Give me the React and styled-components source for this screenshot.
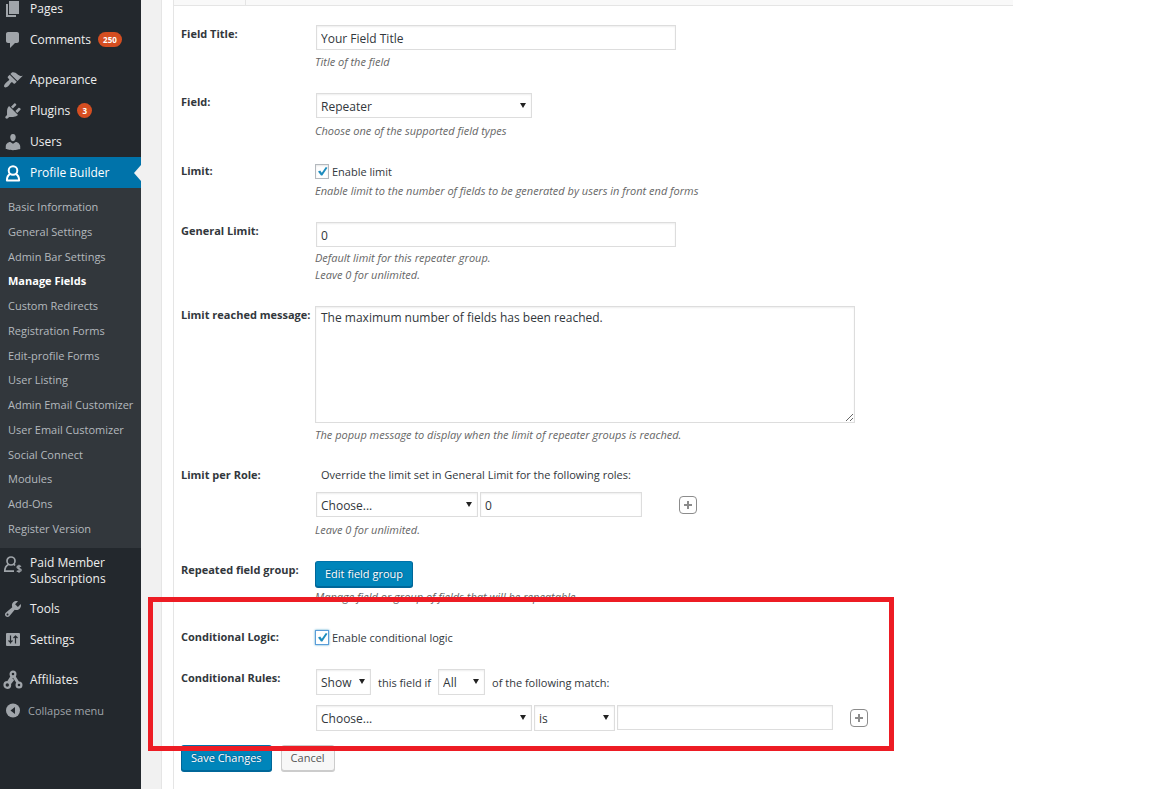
import React from 'react';
import styled, { createGlobalStyle, css } from 'styled-components';

const colors = {
  menu: '#23282d',
  submenu: '#32373c',
  active: '#0073aa',
  icon: '#a0a5aa',
  badge: '#d54e21',
  text: '#32373c',
  muted: '#666',
  border: '#ddd',
  primary: '#0085ba',
  highlight: '#ed1c24',
};

const GlobalStyle = createGlobalStyle`
  * {
    box-sizing: border-box;
  }

  body {
    margin: 0;
    background: #fff;
    color: ${colors.text};
    font-family: 'Open Sans', 'Noto Sans', sans-serif;
    font-size: 11px;
    line-height: 17px;
    overflow: hidden;
  }

  input, select, textarea, button {
    font-family: inherit;
    color: inherit;
    margin: 0;
  }
`;

const Layout = styled.div`
  display: flex;
  min-height: 100vh;
`;

const Sidebar = styled.nav`
  flex: 0 0 141px;
  height: 100vh;
  overflow: hidden;
  background: ${colors.menu};
`;

const Menu = styled.ul`
  list-style: none;
  /* the menu is scrolled a little under the top edge */
  margin: -7px 0 0;
  padding: 0;
`;

const MenuItem = styled.li`
  margin-bottom: ${({ $gap }) => $gap || 0}px;
`;

const MenuLink = styled.a`
  position: relative;
  display: flex;
  align-items: ${({ $tall }) => ($tall ? 'flex-start' : 'center')};
  gap: 7px;
  min-height: 31px;
  padding: ${({ $tall }) => ($tall ? '7px 20px 6px 3px' : '0 0 0 3px')};
  color: #eee;
  font-size: 12px;
  line-height: 16px;
  text-decoration: none;

  svg {
    flex: none;
    color: ${colors.icon};
  }

  ${({ $active }) => $active && css`
    background: ${colors.active};
    color: #fff;

    svg {
      color: #fff;
    }

    &::after {
      content: '';
      position: absolute;
      right: 0;
      top: 8px;
      border: 8px solid transparent;
      border-left-width: 0;
      border-right: 7px solid #f1f1f1;
    }
  `}
`;

const CollapseButton = styled.button`
  display: flex;
  align-items: center;
  gap: 5px;
  height: 31px;
  padding: 0 0 0 3px;
  border: 0;
  background: none;
  color: ${colors.icon};
  font-size: 11px;
`;

const Badge = styled.span`
  min-width: 15px;
  padding: 0 5px;
  border-radius: 8px;
  background: ${colors.badge};
  color: #fff;
  font-size: 8px;
  font-weight: 700;
  line-height: 15px;
  text-align: center;
`;

const Submenu = styled.ul`
  display: flex;
  flex-direction: column;
  justify-content: space-between;
  min-height: 360px;
  margin: 0;
  padding: 7px 0;
  list-style: none;
  background: ${colors.submenu};
`;

const SubmenuLink = styled.a`
  display: block;
  padding-left: 8px;
  color: ${({ $current }) => ($current ? '#fff' : '#b4b9be')};
  font-size: 11px;
  font-weight: ${({ $current }) => ($current ? 700 : 400)};
  line-height: 24px;
  text-decoration: none;
  white-space: nowrap;
`;

const Gutter = styled.div`
  flex: 0 0 21px;
  background: #f1f1f1;
  border-right: 1px solid #e5e5e5;
`;

const Main = styled.main`
  flex: 1;
  margin-left: 11px;
  border-left: 1px solid #e5e5e5;
`;

const TableHead = styled.div`
  max-width: 839px;
  height: 6px;
  background: #f9f9f9;
  border-bottom: 1px solid #e5e5e5;
`;

const HeadCell = styled.div`
  width: 72px;
  height: 5px;
  border-right: 1px solid #e5e5e5;
`;

const Form = styled.form`
  padding: 19px 8px 18px 7px;
`;

const FieldRow = styled.div`
  display: grid;
  grid-template-columns: 134px auto;
  justify-content: start;
  margin-bottom: ${({ $last }) => ($last ? 0 : 23)}px;
`;

const FieldLabel = styled.label`
  font-weight: 700;
  white-space: nowrap;
`;

const Description = styled.p`
  margin: ${({ $space }) => ($space === undefined ? 3 : $space)}px 0 0;
  color: ${colors.muted};
  font-style: italic;
`;

const inset = css`
  border: 1px solid ${colors.border};
  background: #fff;
  box-shadow: inset 0 1px 2px rgba(0, 0, 0, 0.07);
  font-size: 12px;
  outline: none;
`;

const TextInput = styled.input`
  ${inset}
  display: block;
  width: ${({ $width }) => $width}px;
  height: 25px;
  margin-left: ${({ $flush }) => ($flush ? 0 : 1)}px;
  padding: 1px 4px 0;
`;

const TextArea = styled.textarea`
  ${inset}
  display: block;
  width: 540px;
  height: 117px;
  padding: 2px 5px;
  line-height: 18px;
`;

const SelectBox = styled.span`
  position: relative;
  display: block;
  width: ${({ $width }) => $width}px;
  margin-left: ${({ $flush }) => ($flush ? 0 : 1)}px;

  &::after {
    content: '';
    position: absolute;
    right: 6px;
    top: 10px;
    border: 3px solid transparent;
    border-top: 5px solid #222;
    border-bottom: 0;
    pointer-events: none;
  }
`;

const NativeSelect = styled.select`
  ${inset}
  display: block;
  appearance: none;
  width: 100%;
  height: ${({ $tall }) => ($tall ? 26 : 25)}px;
  padding: 1px 4px 0;
`;

const CheckLabel = styled.label`
  display: flex;
  align-items: center;
  gap: 3px;
  height: 18px;
`;

const CheckBox = styled.span`
  position: relative;
  width: 14px;
  height: 15px;

  svg {
    position: absolute;
    left: 2px;
    top: 2px;
    pointer-events: none;
  }
`;

const NativeCheckbox = styled.input`
  display: block;
  appearance: none;
  width: 14px;
  height: 15px;
  border: 1px solid ${({ $focused }) => ($focused ? '#5b9dd9' : '#b4b9be')};
  background: #fff;
  box-shadow: ${({ $focused }) => ($focused
    ? '0 0 2px rgba(30, 140, 190, 0.8)'
    : 'inset 0 1px 2px rgba(0, 0, 0, 0.1)')};
`;

const ControlLine = styled.div`
  display: flex;
  align-items: ${({ $center }) => ($center ? 'center' : 'flex-start')};
  gap: ${({ $gap }) => $gap}px;
  margin-top: ${({ $top }) => $top || 0}px;
`;

const Intro = styled.div`
  padding-left: 6px;
`;

const AddButton = styled.button`
  display: flex;
  align-items: center;
  justify-content: center;
  width: 18px;
  height: 18px;
  margin-left: ${({ $offset }) => $offset}px;
  align-self: center;
  padding: 0;
  border: 1px solid #8c8c8c;
  border-radius: 4px;
  background: #fff;
  color: #8c8c8c;
`;

const Button = styled.button`
  display: block;
  height: 26px;
  padding: 0 9px 1px;
  border: 1px solid #ccc;
  border-radius: 3px;
  background: #f7f7f7;
  box-shadow: 0 1px 0 #ccc;
  color: #555;
  font-size: 11px;
  white-space: nowrap;

  ${({ $primary }) => $primary && css`
    border-color: #0073aa #006799 #006799;
    background: ${colors.primary};
    box-shadow: 0 1px 0 #006799;
    color: #fff;
    text-shadow: 0 -1px 1px #006799, 1px 0 1px #006799;
  `}
`;

const ConditionalGroup = styled.section`
  position: relative;
  width: fit-content;
`;

const Highlight = styled.div`
  position: absolute;
  inset: -31px -26px -20px -33px;
  border: 5px solid ${colors.highlight};
  pointer-events: none;
  z-index: 1;
`;

const Actions = styled.div`
  display: flex;
  gap: 9px;
  margin-top: 14px;
`;

const Icon = ({ children }) => (
  <svg width="20" height="20" viewBox="0 0 20 20" fill="currentColor" aria-hidden="true">
    {children}
  </svg>
);

const icons = {
  pages: <path d="M6 15V2h10v13H6zm-1 1h8v2H3V5h2v11z" />,
  comments: <path d="M5 2h9c1.1 0 2 .9 2 2v7c0 1.1-.9 2-2 2h-2l-5 5v-5H5c-1.1 0-2-.9-2-2V4c0-1.1.9-2 2-2z" />,
  appearance: <path d="M14.48 11.06L7.41 3.99l1.5-1.5c.5-.56 2.3-.47 3.51.32 1.21.8 1.43 1.28 2.91 2.1 1.18.64 2.45 1.26 4.45.85zm-.71.71L6.7 4.7 4.93 6.47c-.39.39-.39 1.02 0 1.41l1.06 1.06c.39.39.39 1.03 0 1.42-.6.6-1.43 1.11-2.21 1.69-.35.26-.7.53-1.01.84C1.43 14.23.4 16.08 1.4 17.07c.99 1 2.84-.03 4.18-1.36.31-.31.58-.66.85-1.02.57-.78 1.08-1.61 1.69-2.21.39-.39 1.02-.39 1.41 0l1.06 1.06c.39.39 1.02.39 1.41 0z" />,
  plugins: <path d="M13.11 4.36L9.87 7.6 8 5.73l3.24-3.24c.35-.34 1.05-.2 1.56.32.52.51.66 1.21.31 1.55zm-8 1.77l.91-1.12 9.01 9.01-1.19.84c-.71.71-2.63 1.16-3.82 1.16H6.14L4.9 17.26c-.59.59-1.54.59-2.12 0-.59-.58-.59-1.53 0-2.12l1.24-1.24v-3.88c0-1.13.4-3.19 1.09-3.89zm7.26 3.97l3.24-3.24c.34-.35 1.04-.21 1.55.31.52.51.66 1.21.31 1.55l-3.24 3.25z" />,
  users: <path d="M10 9.25c-2.27 0-2.73-3.44-2.73-3.44C7 4.02 7.82 2 9.97 2c2.16 0 2.98 2.02 2.71 3.81 0 0-.41 3.44-2.68 3.44zm0 2.57L12.72 10c2.39 0 4.52 2.33 4.52 4.53v2.49s-3.65 1.13-7.24 1.13c-3.65 0-7.24-1.13-7.24-1.13v-2.49c0-2.25 1.94-4.48 4.47-4.48z" />,
  profile: (
    <g fill="none" stroke="currentColor" strokeWidth="2">
      <circle cx="10" cy="7.5" r="4.3" />
      <path d="M7.2 10.8C4.8 12 3.900 13.8 3.900 17.500h12.200c0-3.700-.9-5.500-3.300-6.700" strokeLinejoin="round" />
    </g>
  ),
  members: (
    <g fill="none" stroke="currentColor" strokeWidth="1.7">
      <circle cx="8" cy="6" r="4" />
      <path d="M5.4 9.4C2.8 10.6 1.8 12.6 1.8 16.200H11M10.600 9.400l1.600 1" />
      <path d="M18 11.600c-.8-.9-4-1-4 .7 0 1.800 4.200.9 4.200 2.800 0 1.700-3.400 1.700-4.400.6M16 9.800v8" strokeWidth="1.300" />
    </g>
  ),
  tools: <path d="M16.68 9.77c-1.34 1.34-3.3 1.67-4.95.99l-5.41 6.52c-.99.99-2.59.99-3.58 0s-.99-2.59 0-3.57l6.52-5.42c-.68-1.65-.35-3.61.99-4.95 1.28-1.28 3.12-1.62 4.72-1.06l-2.89 2.89 2.82 2.82 2.86-2.87c.53 1.58.18 3.39-1.08 4.65zM3.81 16.21c.4.39 1.04.39 1.43 0 .4-.4.4-1.04 0-1.43-.39-.4-1.03-.4-1.43 0-.39.39-.39 1.03 0 1.43z" />,
  settings: (
    <>
      <rect x="3" y="3" width="14" height="13" rx="1" />
      <path d="M7.500 5.500v8M5.500 10.500l2 2 2-2M12.500 13.500v-8M10.500 8l2-2 2 2" fill="none" stroke="#23282d" strokeWidth="1.200" />
    </>
  ),
  affiliates: (
    <g fill="none" stroke="currentColor" strokeWidth="2.200">
      <circle cx="10" cy="4" r="2.400" />
      <circle cx="4.300" cy="15" r="2.800" />
      <circle cx="16" cy="15" r="2.400" />
      <path d="M9 6.500L5.500 12M11 6.500l3.800 6M6.500 13.500L10 9" strokeWidth="3" />
    </g>
  ),
  collapse: (
    <>
      <circle cx="10" cy="9.500" r="7" />
      <path d="M12 6v7L7.500 9.500z" fill="#23282d" />
    </>
  ),
};

const submenu = [
  'Basic Information',
  'General Settings',
  'Admin Bar Settings',
  'Manage Fields',
  'Custom Redirects',
  'Registration Forms',
  'Edit-profile Forms',
  'User Listing',
  'Admin Email Customizer',
  'User Email Customizer',
  'Social Connect',
  'Modules',
  'Add-Ons',
  'Register Version',
];

const menu = [
  { icon: 'pages', title: 'Pages' },
  { icon: 'comments', title: 'Comments', count: 250, gap: 9 },
  { icon: 'appearance', title: 'Appearance' },
  { icon: 'plugins', title: 'Plugins', count: 3 },
  { icon: 'users', title: 'Users' },
  { icon: 'profile', title: 'Profile Builder', active: true, items: submenu },
  { icon: 'members', title: 'Paid Member Subscriptions', tall: true },
  { icon: 'tools', title: 'Tools' },
  { icon: 'settings', title: 'Settings', gap: 9 },
  { icon: 'affiliates', title: 'Affiliates' },
];

const AdminMenu = () => (
  <Sidebar>
    <Menu>
      {menu.map(({ icon, title, count, gap, active, tall, items }) => (
        <MenuItem key={title} $gap={gap}>
          <MenuLink href="#" $active={active} $tall={tall}>
            <Icon>{icons[icon]}</Icon>
            <span>{title}</span>
            {count && <Badge>{count}</Badge>}
          </MenuLink>
          {items && (
            <Submenu>
              {items.map(item => (
                <li key={item}>
                  <SubmenuLink href="#" $current={item === 'Manage Fields'}>{item}</SubmenuLink>
                </li>
              ))}
            </Submenu>
          )}
        </MenuItem>
      ))}
      <MenuItem>
        <CollapseButton type="button">
          <Icon>{icons.collapse}</Icon>
          Collapse menu
        </CollapseButton>
      </MenuItem>
    </Menu>
  </Sidebar>
);

const Select = ({ id, label, options, width, tall, flush }) => (
  <SelectBox $width={width} $flush={flush}>
    <NativeSelect id={id} aria-label={label} $tall={tall}>
      {options.map(option => <option key={option}>{option}</option>)}
    </NativeSelect>
  </SelectBox>
);

const Checkbox = ({ id, children, focused }) => (
  <CheckLabel>
    <CheckBox>
      <NativeCheckbox id={id} type="checkbox" defaultChecked $focused={focused} />
      <svg width="11" height="11" viewBox="0 0 11 11" aria-hidden="true">
        <path d="M1 5.500l2.200-1 1.600 2.300L8.800 1l1.700.8L5.300 9.500H4z" fill="#1e8cbe" />
      </svg>
    </CheckBox>
    {children}
  </CheckLabel>
);

const Add = ({ offset, label }) => (
  <AddButton type="button" aria-label={label} $offset={offset}>
    <svg width="10" height="10" viewBox="0 0 10 10" aria-hidden="true">
      <path d="M5 1v8M1 5h8" stroke="currentColor" strokeWidth="2" />
    </svg>
  </AddButton>
);

const App = () => (
  <>
    <GlobalStyle />
    <Layout>
      <AdminMenu />
      <Gutter />
      <Main>
        <TableHead><HeadCell /></TableHead>
        <Form onSubmit={e => e.preventDefault()}>
          <FieldRow>
            <FieldLabel htmlFor="field-title">Field Title:</FieldLabel>
            <div>
              <TextInput id="field-title" type="text" defaultValue="Your Field Title" $width={360} />
              <Description>Title of the field</Description>
            </div>
          </FieldRow>

          <FieldRow>
            <FieldLabel htmlFor="field">Field:</FieldLabel>
            <div>
              <Select id="field" options={['Repeater']} width={216} />
              <Description $space={4}>Choose one of the supported field types</Description>
            </div>
          </FieldRow>

          <FieldRow>
            <FieldLabel htmlFor="limit">Limit:</FieldLabel>
            <div>
              <Checkbox id="limit">Enable limit</Checkbox>
              <Description $space={2}>
                Enable limit to the number of fields to be generated by users in front end forms
              </Description>
            </div>
          </FieldRow>

          <FieldRow>
            <FieldLabel htmlFor="general-limit">General Limit:</FieldLabel>
            <div>
              <TextInput id="general-limit" type="text" defaultValue="0" $width={360} />
              <Description $space={2}>
                Default limit for this repeater group.
                <br />
                Leave 0 for unlimited.
              </Description>
            </div>
          </FieldRow>

          <FieldRow>
            <FieldLabel htmlFor="limit-message">Limit reached message:</FieldLabel>
            <div>
              <TextArea id="limit-message" defaultValue="The maximum number of fields has been reached." />
              <Description>
                The popup message to display when the limit of repeater groups is reached.
              </Description>
            </div>
          </FieldRow>

          <FieldRow>
            <FieldLabel htmlFor="role">Limit per Role:</FieldLabel>
            <div>
              <Intro>Override the limit set in General Limit for the following roles:</Intro>
              <ControlLine $gap={2} $top={9}>
                <Select id="role" options={['Choose...']} width={162} />
                <TextInput type="text" defaultValue="0" aria-label="Role limit" $width={162} $flush />
                <Add offset={35} label="Add role limit" />
              </ControlLine>
              <Description $space={4}>Leave 0 for unlimited.</Description>
            </div>
          </FieldRow>

          <FieldRow>
            <FieldLabel as="span">Repeated field group:</FieldLabel>
            <div>
              <Button type="button" $primary>Edit field group</Button>
              <Description $space={1}>Manage field or group of fields that will be repeatable</Description>
            </div>
          </FieldRow>

          <ConditionalGroup>
            <FieldRow>
              <FieldLabel htmlFor="conditional-logic">Conditional Logic:</FieldLabel>
              <Checkbox id="conditional-logic" focused>Enable conditional logic</Checkbox>
            </FieldRow>

            <FieldRow $last>
              <FieldLabel htmlFor="rule-action">Conditional Rules:</FieldLabel>
              <div>
                <ControlLine $gap={7} $center>
                  <Select id="rule-action" options={['Show', 'Hide']} width={55} tall />
                  this field if
                  <Select label="Match" options={['All', 'Any']} width={47} tall flush />
                  of the following match:
                </ControlLine>
                <ControlLine $gap={2} $top={10}>
                  <Select label="Rule field" options={['Choose...']} width={216} tall />
                  <Select label="Operator" options={['is', 'is not']} width={81} tall flush />
                  <TextInput type="text" aria-label="Rule value" $width={216} $flush />
                  <Add offset={15} label="Add rule" />
                </ControlLine>
              </div>
            </FieldRow>
            <Highlight />
          </ConditionalGroup>

          <Actions>
            <Button type="submit" $primary>Save Changes</Button>
            <Button type="button">Cancel</Button>
          </Actions>
        </Form>
      </Main>
    </Layout>
  </>
);

export default App;
